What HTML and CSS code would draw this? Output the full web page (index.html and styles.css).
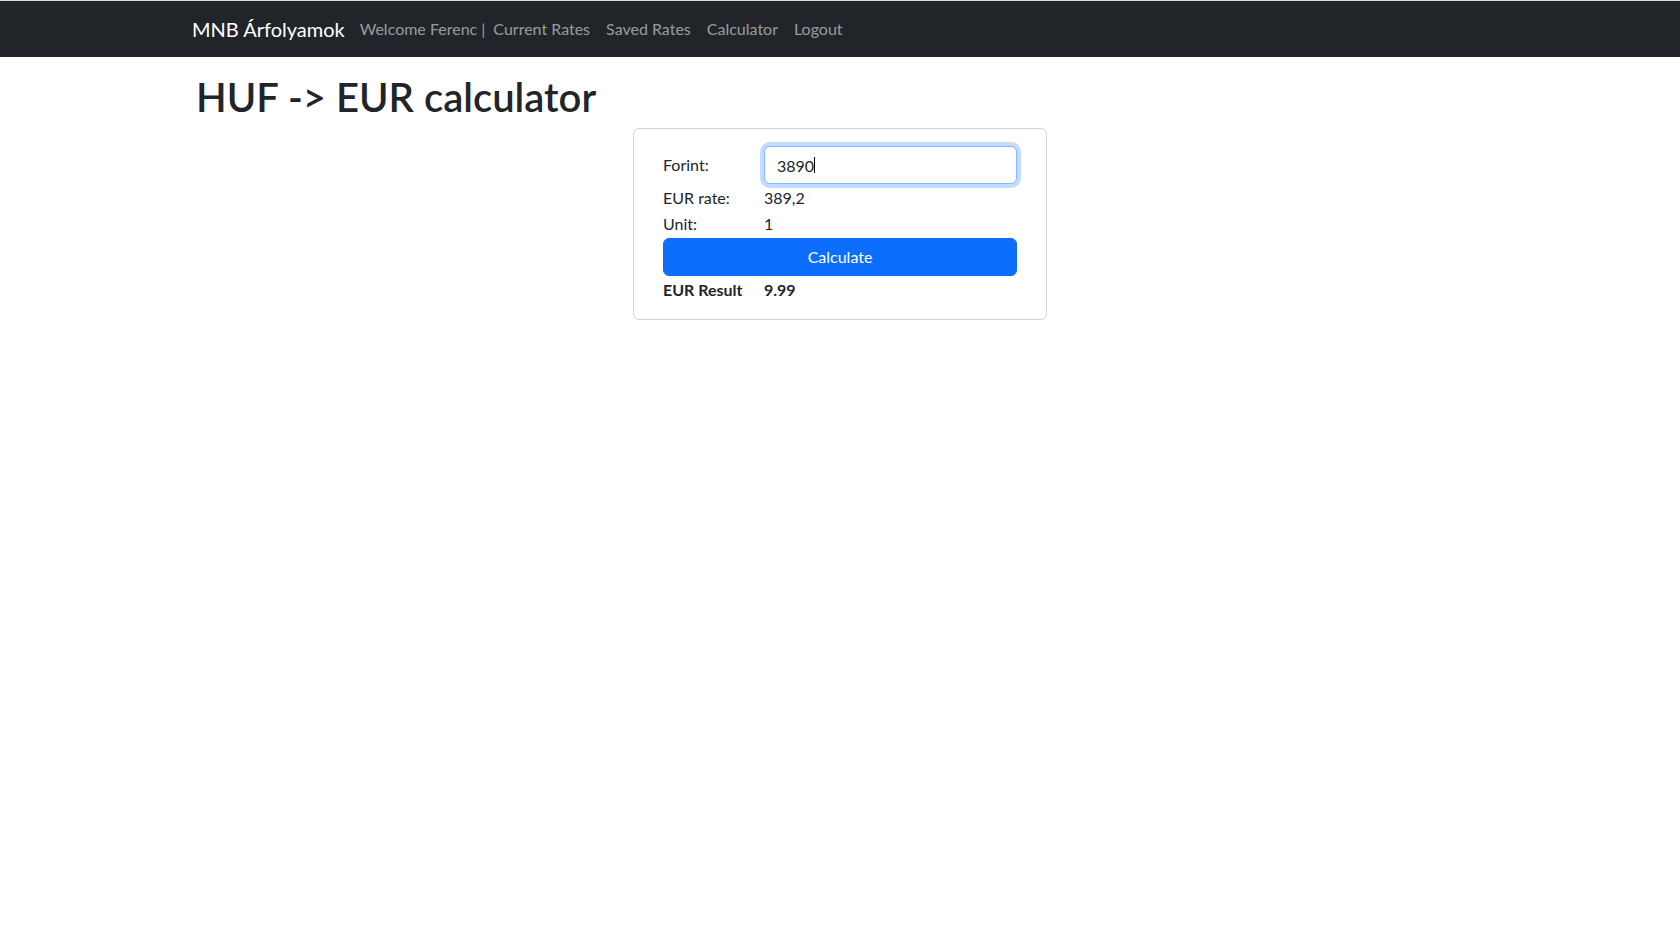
FILE: index.html
```html
<!DOCTYPE html>
<html lang="en">
<head>
<meta charset="utf-8">
<title>HUF -> EUR calculator</title>
<link rel="stylesheet" href="styles.css">
</head>
<body>
<nav class="navbar">
  <div class="container nav-inner">
    <a class="brand" href="#">MNB Árfolyamok</a>
    <span class="welcome">Welcome Ferenc |</span>
    <a class="nav-link" href="#">Current Rates</a>
    <a class="nav-link" href="#">Saved Rates</a>
    <a class="nav-link" href="#">Calculator</a>
    <a class="nav-link" href="#">Logout</a>
  </div>
</nav>
<main class="container">
  <h1 class="title">HUF -&gt; EUR calculator</h1>
  <div class="calc-card">
    <div class="calc-row">
      <label class="calc-label" for="forint">Forint:</label>
      <div class="field">
        <input class="calc-input" id="forint" type="text" value="3890">
        <span class="caret"></span>
      </div>
    </div>
    <div class="calc-row">
      <span class="calc-label">EUR rate:</span>
      <span class="calc-value">389,2</span>
    </div>
    <div class="calc-row">
      <span class="calc-label">Unit:</span>
      <span class="calc-value">1</span>
    </div>
    <button class="calc-btn" type="button">Calculate</button>
    <div class="calc-row result-row">
      <span class="calc-label">EUR Result</span>
      <span class="calc-value">9.99</span>
    </div>
  </div>
</main>
</body>
</html>
```
FILE: styles.css
```css
* { box-sizing: border-box; }
html, body { margin: 0; padding: 0; }
body {
  font-family: Lato, "Open Sans", sans-serif;
  font-size: 16px;
  line-height: 1.5;
  color: #212529;
  background: #fff;
  border-top: 1px solid #d9d9d9;
}
.container {
  max-width: 1320px;
  margin: 0 auto;
  padding: 0 12px;
}
.navbar {
  background: #212529;
  height: 56px;
}
.nav-inner {
  display: flex;
  align-items: center;
  height: 100%;
}
.brand {
  color: #fff;
  font-size: 20px;
  text-decoration: none;
  margin-right: 15px;
}
.welcome { color: rgba(255,255,255,.55); }
.nav-link {
  color: rgba(255,255,255,.55);
  text-decoration: none;
  padding: 8px;
}
.title {
  font-size: 40px;
  font-weight: 600;
  line-height: 1.2;
  margin: 16px 0 7px 4px;
}
.calc-card {
  width: 414px;
  margin: 0 auto;
  border: 1px solid rgba(0,0,0,.175);
  border-radius: 6px;
  padding: 17px 29px 17px;
  display: flex;
  flex-direction: column;
  gap: 2px;
}
.calc-row { display: flex; align-items: center; }
.calc-label { width: 101px; flex: none; }
.field { flex: 1; position: relative; display: flex; }
.calc-input {
  flex: 1;
  width: 100%;
  height: 38px;
  font: inherit;
  color: #212529;
  padding: 6px 12px;
  border: 1px solid #86b7fe;
  border-radius: 6px;
  outline: none;
  box-shadow: 0 0 0 4px rgba(13,110,253,.25);
}
.caret {
  position: absolute;
  left: 50px;
  top: 11px;
  width: 1px;
  height: 16px;
  background: #000;
}
.calc-btn {
  height: 38px;
  font: inherit;
  color: #fff;
  background: #0d6efd;
  border: 1px solid #0d6efd;
  border-radius: 6px;
}
.result-row { font-weight: 700; }
```
